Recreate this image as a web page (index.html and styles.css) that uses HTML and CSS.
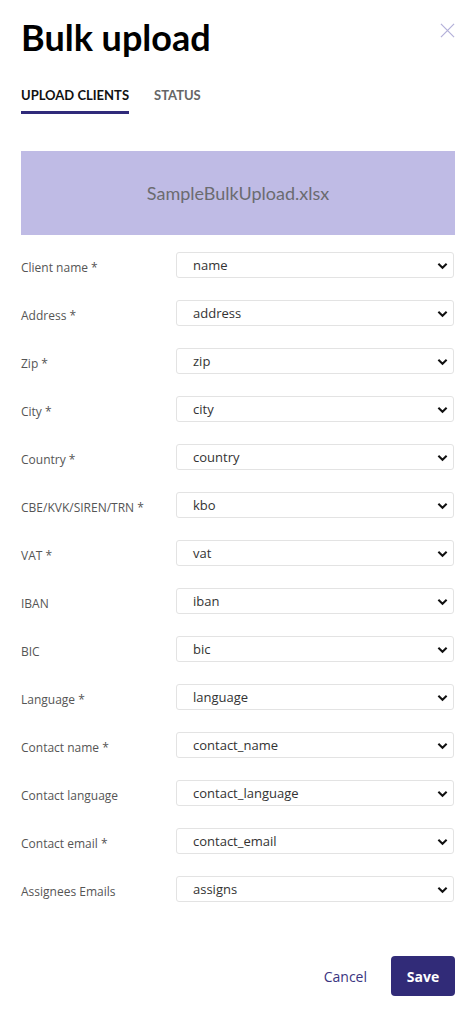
FILE: index.html
```html
<!DOCTYPE html>
<html>
<head>
<meta charset="utf-8">
<link rel="stylesheet" href="styles.css">
</head>
<body>
<div class="panel">
  <div class="header">
    <h1 class="title">Bulk upload</h1>
    <svg class="close" width="16" height="16" viewBox="0 0 16 16"><path d="M1 1L15 15M15 1L1 15" stroke="#b3b0d9" stroke-width="1.3" fill="none"/></svg>
  </div>
  <div class="tabs">
    <div class="tab active">UPLOAD CLIENTS</div>
    <div class="tab">STATUS</div>
  </div>
  <div class="drop">SampleBulkUpload.xlsx</div>
  <div class="form">
    <div class="row"><label class="lbl">Client name *</label><div class="sel"><span>name</span><svg class="chev" viewBox="0 0 12 8"><path d="M1.5 1.5L6 6L10.5 1.5" stroke="#111" stroke-width="2.2" fill="none"/></svg></div></div>
    <div class="row"><label class="lbl">Address *</label><div class="sel"><span>address</span><svg class="chev" viewBox="0 0 12 8"><path d="M1.5 1.5L6 6L10.5 1.5" stroke="#111" stroke-width="2.2" fill="none"/></svg></div></div>
    <div class="row"><label class="lbl">Zip *</label><div class="sel"><span>zip</span><svg class="chev" viewBox="0 0 12 8"><path d="M1.5 1.5L6 6L10.5 1.5" stroke="#111" stroke-width="2.2" fill="none"/></svg></div></div>
    <div class="row"><label class="lbl">City *</label><div class="sel"><span>city</span><svg class="chev" viewBox="0 0 12 8"><path d="M1.5 1.5L6 6L10.5 1.5" stroke="#111" stroke-width="2.2" fill="none"/></svg></div></div>
    <div class="row"><label class="lbl">Country *</label><div class="sel"><span>country</span><svg class="chev" viewBox="0 0 12 8"><path d="M1.5 1.5L6 6L10.5 1.5" stroke="#111" stroke-width="2.2" fill="none"/></svg></div></div>
    <div class="row"><label class="lbl">CBE/KVK/SIREN/TRN *</label><div class="sel"><span>kbo</span><svg class="chev" viewBox="0 0 12 8"><path d="M1.5 1.5L6 6L10.5 1.5" stroke="#111" stroke-width="2.2" fill="none"/></svg></div></div>
    <div class="row"><label class="lbl">VAT *</label><div class="sel"><span>vat</span><svg class="chev" viewBox="0 0 12 8"><path d="M1.5 1.5L6 6L10.5 1.5" stroke="#111" stroke-width="2.2" fill="none"/></svg></div></div>
    <div class="row"><label class="lbl">IBAN</label><div class="sel"><span>iban</span><svg class="chev" viewBox="0 0 12 8"><path d="M1.5 1.5L6 6L10.5 1.5" stroke="#111" stroke-width="2.2" fill="none"/></svg></div></div>
    <div class="row"><label class="lbl">BIC</label><div class="sel"><span>bic</span><svg class="chev" viewBox="0 0 12 8"><path d="M1.5 1.5L6 6L10.5 1.5" stroke="#111" stroke-width="2.2" fill="none"/></svg></div></div>
    <div class="row"><label class="lbl">Language *</label><div class="sel"><span>language</span><svg class="chev" viewBox="0 0 12 8"><path d="M1.5 1.5L6 6L10.5 1.5" stroke="#111" stroke-width="2.2" fill="none"/></svg></div></div>
    <div class="row"><label class="lbl">Contact name *</label><div class="sel"><span>contact_name</span><svg class="chev" viewBox="0 0 12 8"><path d="M1.5 1.5L6 6L10.5 1.5" stroke="#111" stroke-width="2.2" fill="none"/></svg></div></div>
    <div class="row"><label class="lbl">Contact language</label><div class="sel"><span>contact_language</span><svg class="chev" viewBox="0 0 12 8"><path d="M1.5 1.5L6 6L10.5 1.5" stroke="#111" stroke-width="2.2" fill="none"/></svg></div></div>
    <div class="row"><label class="lbl">Contact email *</label><div class="sel"><span>contact_email</span><svg class="chev" viewBox="0 0 12 8"><path d="M1.5 1.5L6 6L10.5 1.5" stroke="#111" stroke-width="2.2" fill="none"/></svg></div></div>
    <div class="row"><label class="lbl">Assignees Emails</label><div class="sel"><span>assigns</span><svg class="chev" viewBox="0 0 12 8"><path d="M1.5 1.5L6 6L10.5 1.5" stroke="#111" stroke-width="2.2" fill="none"/></svg></div></div>
  </div>
  <div class="actions">
    <button class="cancel">Cancel</button>
    <button class="save">Save</button>
  </div>
</div>
</body>
</html>
```
FILE: styles.css
```css
* { box-sizing: border-box; }
html, body { margin: 0; padding: 0; background: #fff; }
body { width: 475px; height: 1024px; overflow: hidden; font-family: "Open Sans", "Liberation Sans", sans-serif; }
.panel { padding: 0 20px 0 21px; display: flex; flex-direction: column; }
.header { display: flex; justify-content: space-between; align-items: flex-start; padding-top: 14px; }
.title { margin: 0; font-family: Lato, "Liberation Sans", sans-serif; font-weight: 700; font-size: 36px; line-height: 46px; color: #000; }
.close { width: 15px; height: 15px; margin-top: 9px; margin-right: 0; }
.tabs { display: flex; gap: 25px; margin-top: 26px; }
.tab { font-family: Lato, "Liberation Sans", sans-serif; font-weight: 700; font-size: 13px; line-height: 18px; color: #666; padding-bottom: 7px; border-bottom: 3px solid transparent; }
.tab.active { color: #111; border-bottom-color: #302a7a; }
.drop { margin-top: 37px; height: 84px; background: #bfbbe5; display: flex; align-items: center; justify-content: center; font-family: Lato, "Liberation Sans", sans-serif; font-size: 18px; color: #6b6b70; }
.form { margin-top: 17px; display: flex; flex-direction: column; gap: 22px; }
.row { display: flex; align-items: center; height: 26px; }
.lbl { width: 155px; flex: none; font-size: 12px; color: #555; padding-top: 4px; }
.sel { position: relative; flex: 1; height: 26px; border: 1px solid #e3e3e3; border-radius: 3px; display: flex; align-items: center; padding-left: 16px; font-size: 13px; color: #333; margin-right: 1px; }
.chev { position: absolute; right: 5px; top: 9px; width: 11px; height: 8px; }
.actions { display: flex; justify-content: flex-end; align-items: center; gap: 24px; margin-top: 54px; }
.cancel { background: none; border: 0; padding: 0; font-family: "Open Sans", "Liberation Sans", sans-serif; font-size: 14px; color: #3a3480; }
.save { width: 64px; height: 40px; border: 0; border-radius: 4px; background: #312b78; color: #fff; font-family: "Open Sans", "Liberation Sans", sans-serif; font-weight: 700; font-size: 14px; }
```
